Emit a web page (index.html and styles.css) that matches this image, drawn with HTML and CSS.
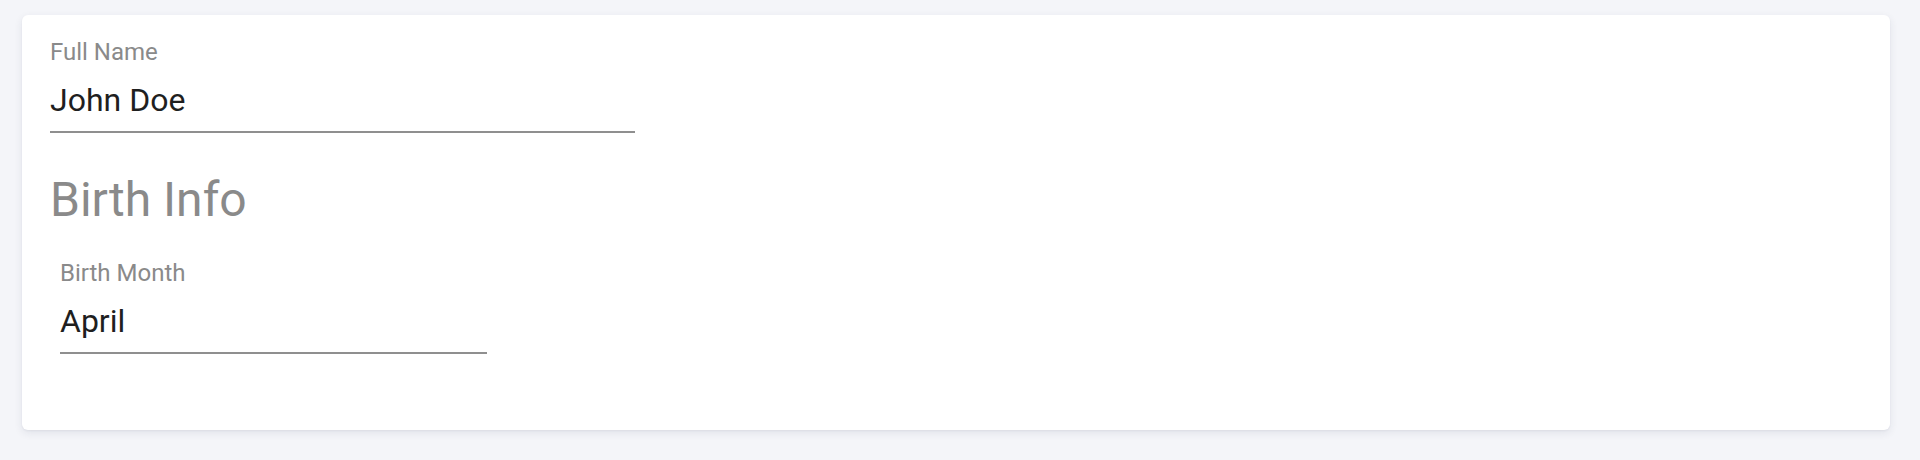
FILE: index.html
```html
<!DOCTYPE html>
<html lang="en">
<head>
<meta charset="utf-8">
<title>Form</title>
<link rel="stylesheet" href="styles.css">
</head>
<body>
<div class="page">
  <div class="card">
    <div class="field field-name">
      <label class="field-label">Full Name</label>
      <div class="field-input">John Doe</div>
    </div>
    <h2 class="section-title">Birth Info</h2>
    <div class="birth-row">
      <div class="field field-month">
        <label class="field-label">Birth Month</label>
        <div class="field-input">April</div>
      </div>
    </div>
  </div>
</div>
</body>
</html>
```

FILE: styles.css
```css
html, body {
  margin: 0;
  padding: 0;
  background: #f4f5f9;
  font-family: Roboto, "Liberation Sans", Arial, sans-serif;
}

.page {
  width: 1920px;
  height: 460px;
  box-sizing: border-box;
  padding: 15px 30px 0 22px;
}

.card {
  background: #ffffff;
  border-radius: 6px;
  box-shadow: 0 3px 8px rgba(30, 40, 80, 0.09), 0 1px 2px rgba(30, 40, 80, 0.05);
  height: 415px;
  box-sizing: border-box;
  padding: 23px 28px 0 28px;
}

.field {
  display: flex;
  flex-direction: column;
}

.field-name {
  width: 585px;
}

.field-month {
  width: 427px;
}

.field-label {
  font-size: 24px;
  line-height: 28px;
  color: #8a8a8a;
}

.field-input {
  font-size: 32px;
  line-height: 38px;
  color: #1f1f1f;
  padding: 15px 0 12px 0;
  border-bottom: 2px solid #8f8f8f;
}

.section-title {
  margin: 39px 0 0 0;
  font-size: 48px;
  line-height: 56px;
  font-weight: 400;
  color: #8a8a8a;
}

.birth-row {
  display: flex;
  padding: 31px 0 0 10px;
}
```
